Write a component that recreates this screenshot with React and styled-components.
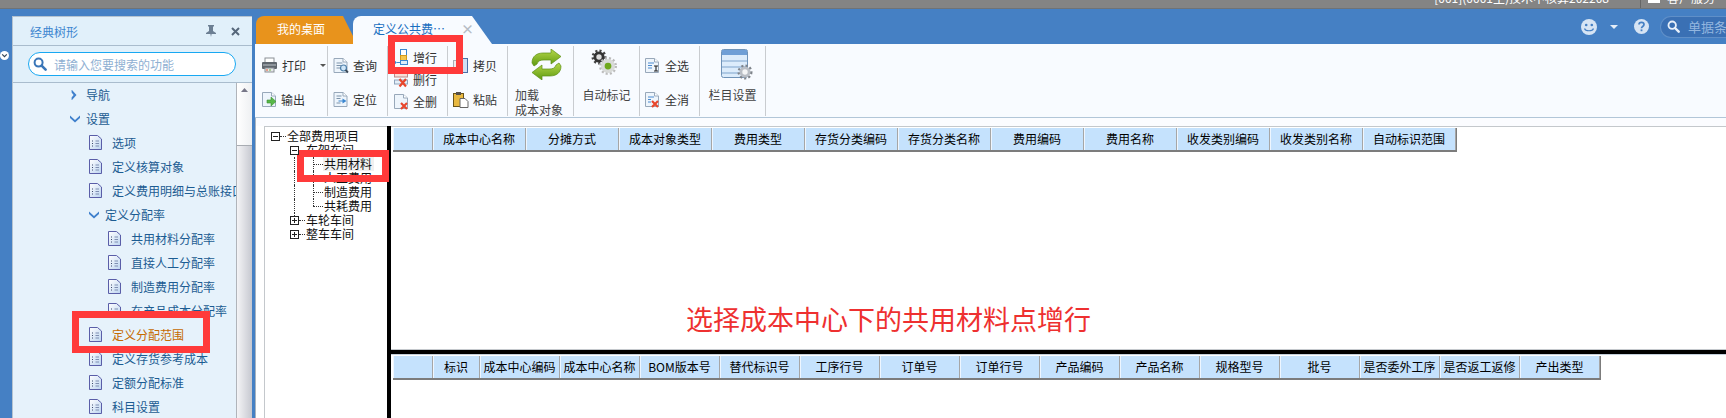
import React from "react";
import styled, { createGlobalStyle } from "styled-components";

const Global = createGlobalStyle`
  html, body { margin: 0; padding: 0; background: #4580c4; }
  body { font-family: "Noto Sans CJK SC", "Liberation Sans", sans-serif; font-size: 12px; }
`;

const Page = styled.div`
  position: relative;
  width: 1726px;
  height: 418px;
  overflow: hidden;
  background: #4580c4;
  display: flex;
  flex-direction: column;
`;

const TopStrip = styled.div`
  height: 8px;
  flex: none;
  background: #848484;
  border-bottom: 1px solid #6f7377;
  display: flex;
  justify-content: flex-end;
  align-items: flex-end;
  overflow: hidden;
  color: #fff;
  line-height: 14px;
`;

const StripText = styled.span`
  white-space: nowrap;
  margin-bottom: 3px;
  margin-right: ${(p) => p.$mr || 0}px;
`;

const StripDivider = styled.div`
  align-self: stretch;
  width: 1px;
  background: #666;
  margin-right: 7px;
`;

const StripIcon = styled.div`
  width: 12px;
  height: 3px;
  background: #fff;
  align-self: flex-start;
  margin-right: 7px;
`;

const Body = styled.div`
  flex: 1;
  min-height: 0;
  display: flex;
  padding-top: 7px;
`;

const Gutter = styled.div`
  width: 12px;
  flex: none;
  padding-top: 35px;
`;

const Sidebar = styled.aside`
  width: 240px;
  flex: none;
  display: flex;
  flex-direction: column;
  background: #e6f2fb;
  border-left: 1px solid #b5c3d0;
  border-top: 1px solid #b5c3d0;
  box-sizing: border-box;
`;

const SideHead = styled.div`
  height: 29px;
  flex: none;
  box-sizing: border-box;
  display: flex;
  align-items: center;
  padding: 0 12px 0 17px;
  background: #e1f0fa;
  border-bottom: 1px solid #a9bccd;
  color: #3d86d0;
`;

const SideTitle = styled.span`
  flex: 1;
`;

const SearchWrap = styled.div`
  height: 37px;
  flex: none;
  box-sizing: border-box;
  padding: 6px 16px 0 15px;
  background: #e1f0fa;
  border-bottom: 1px solid #a9bccd;
`;

const SearchBox = styled.div`
  height: 24px;
  box-sizing: border-box;
  background: #fff;
  border: 1px solid #18a8f2;
  border-radius: 12px;
  display: flex;
  align-items: center;
  gap: 7px;
  padding-left: 4px;
  color: #8fb0d2;
`;

const SideBody = styled.div`
  flex: 1;
  min-height: 0;
  display: flex;
`;

const NavTree = styled.div`
  flex: 1;
  min-width: 0;
  overflow: hidden;
`;

const NavRow = styled.div`
  height: 24px;
  display: flex;
  align-items: center;
  white-space: nowrap;
  color: ${(p) => (p.$active ? "#c56a00" : "#1c5c92")};
  padding-left: ${(p) => p.$indent}px;
  &:first-child {
    height: 23px;
  }
`;

const NavArrow = styled.span`
  width: 16px;
  flex: none;
  display: flex;
`;

const NavIcon = styled.span`
  width: 23px;
  flex: none;
  display: flex;
`;

const Scrollbar = styled.div`
  width: 16px;
  flex: none;
  display: flex;
  flex-direction: column;
  border-left: 1px solid #b0b4ba;
  box-sizing: border-box;
`;

const ScrollTrack = styled.div`
  height: 63px;
  flex: none;
  display: flex;
  justify-content: center;
  padding-top: 5px;
  box-sizing: border-box;
  background: linear-gradient(90deg, #fff, #eef0f2);
  border-bottom: 1px solid #a8acb2;
`;

const ScrollThumb = styled.div`
  flex: 1;
  background: linear-gradient(90deg, #f4f4f6, #c6c8d0);
`;

const Main = styled.main`
  flex: 1;
  min-width: 0;
  margin-left: 3px;
  display: flex;
  flex-direction: column;
`;

const TabRow = styled.div`
  height: 28px;
  flex: none;
  display: flex;
  align-items: stretch;
`;

const TabOrange = styled.div`
  width: 101px;
  margin-left: 1px;
  background: #e8931c;
  color: #fff;
  border-radius: 8px 0 0 0;
  clip-path: polygon(0 0, 87px 0, 101px 100%, 0 100%);
  box-sizing: border-box;
  padding-left: 21px;
  line-height: 26px;
`;

const TabActive = styled.div`
  width: 139px;
  margin-left: -4px;
  background: #f8fbff;
  color: #1a6fc0;
  border-radius: 8px 8px 0 0;
  clip-path: polygon(0 0, 119px 0, 139px 100%, 0 100%);
  box-sizing: border-box;
  padding-left: 20px;
  line-height: 26px;
  display: flex;
`;

const TabClose = styled.span`
  margin-left: 16px;
  color: #b5bcc4;
  font-size: 13px;
  font-weight: 700;
`;

const RightTools = styled.div`
  margin-left: auto;
  display: flex;
  align-items: center;
  padding-bottom: 7px;
`;

const ToolSearch = styled.div`
  width: 66px;
  height: 22px;
  margin-left: 11px;
  box-sizing: border-box;
  background: #3a70b4;
  border: 1px solid #5f8fc8;
  border-right: 0;
  border-radius: 11px 0 0 11px;
  display: flex;
  align-items: center;
  gap: 8px;
  padding-left: 6px;
  overflow: hidden;
  white-space: nowrap;
  color: #93b6df;
  font-size: 13px;
  svg {
    flex: none;
  }
`;

const Toolbar = styled.div`
  height: 74px;
  flex: none;
  box-sizing: border-box;
  display: flex;
  padding: 2px 0 1px;
  background: #f8fbff;
  border-bottom: 1px solid #b2c6d8;
`;

const Group = styled.div`
  width: ${(p) => p.$w}px;
  flex: none;
  box-sizing: border-box;
  border-right: 1px solid #c9ccd0;
  display: flex;
  flex-direction: column;
  padding: ${(p) => p.$pad || "0"};
  color: #333;
`;

const Tool = styled.div`
  display: flex;
  align-items: center;
  height: ${(p) => p.$h || 35}px;
  gap: ${(p) => p.$gap || 4}px;
`;

const Caret = styled.span`
  width: 0;
  height: 0;
  margin-left: 10px;
  border: 3px solid transparent;
  border-top: 3px solid #555;
  border-bottom: 0;
`;

const WhiteCaret = styled(Caret)`
  margin-left: 0;
  border-width: 4px;
  border-bottom: 0;
  border-top-color: #e4edf7;
`;

const BigTool = styled.div`
  display: flex;
  flex-direction: column;
  align-items: ${(p) => (p.$left ? "flex-start" : "center")};
  line-height: 15px;
  color: #444;
  padding-left: ${(p) => p.$pl || 0}px;
`;

const BigIcon = styled.div`
  height: 38px;
  align-self: center;
  display: flex;
  align-items: flex-start;
  padding-top: 3px;
  margin-left: ${(p) => p.$ml || 0}px;
`;

const Content = styled.div`
  flex: 1;
  min-height: 0;
  display: flex;
  background: #fff;
  padding-top: 8px;
  border-left: 1px solid #a9b4be;
  padding-left: 8px;
  background-image: linear-gradient(#fbfcff, #fbfcff);
  background-size: 100% 8px;
  background-repeat: no-repeat;
`;

const TreePane = styled.div`
  width: 123px;
  flex: none;
  box-sizing: border-box;
  background: #fff;
  border-top: 1px solid #c4c8cc;
  border-left: 1px solid #c4c8cc;
  padding-top: 2px;
  color: #111;
`;

const TreeRow = styled.div`
  position: relative;
  height: 14px;
  display: flex;
  align-items: center;
  white-space: nowrap;
  padding-left: ${(p) => p.$indent}px;
`;

const Expander = styled.span`
  width: 9px;
  height: 9px;
  flex: none;
  box-sizing: border-box;
  border: 1px solid #222;
  background: #fff;
  position: relative;
  z-index: 1;
  &::before {
    content: "";
    position: absolute;
    left: 1px;
    right: 1px;
    top: 3px;
    height: 1px;
    background: #222;
  }
  ${(p) =>
    p.$plus &&
    `&::after {
      content: "";
      position: absolute;
      top: 1px;
      bottom: 1px;
      left: 3px;
      width: 1px;
      background: #222;
    }`}
`;

const Dots = styled.span`
  width: ${(p) => p.$w}px;
  flex: none;
  border-top: 1px dotted #333;
`;

const Spine = styled.span`
  position: absolute;
  left: ${(p) => p.$x}px;
  top: ${(p) => p.$top || 0}px;
  bottom: ${(p) => p.$bottom || 0}px;
  border-left: 1px dotted #333;
`;

const TreeLabel = styled.span`
  background: ${(p) => (p.$selected ? "#f0f0f0" : "transparent")};
  padding: 0 2px 0 1px;
  line-height: 14px;
`;

const VSplit = styled.div`
  width: 4px;
  flex: none;
  background: #000;
`;

const Panes = styled.div`
  flex: 1;
  min-width: 0;
  display: flex;
  flex-direction: column;
`;

const TopGridPane = styled.div`
  height: 224px;
  flex: none;
  box-sizing: border-box;
  padding: 1px 0 0 2px;
  background: #fff;
  border-top: 1px solid #c4c8cc;
  border-bottom: 1px solid #c4c8cc;
`;

const BottomGridPane = styled.div`
  flex: 1;
  padding: 1px 0 0 2px;
  background: #fff;
`;

const HSplit = styled.div`
  height: 5px;
  flex: none;
  box-sizing: border-box;
  background: #000;
  border-bottom: 1px solid #c4d0dc;
`;

const GridHead = styled.div`
  display: inline-flex;
  height: 22px;
  border-bottom: 2px solid #7c7c7c;
  border-right: 1px solid #7c7c7c;
`;

const HeadCell = styled.div`
  width: ${(p) => p.$w}px;
  box-sizing: border-box;
  background: #c5e2fd;
  border-right: 1px solid #a6a6a6;
  box-shadow: inset 1px 0 0 #eef6ff;
  text-align: center;
  line-height: 21px;
  color: #000;
  white-space: nowrap;
  overflow: hidden;
`;

const Marker = styled.div`
  position: absolute;
  left: ${(p) => p.$x}px;
  top: ${(p) => p.$y}px;
  width: ${(p) => p.$w}px;
  height: ${(p) => p.$h}px;
  box-sizing: border-box;
  border: 7px solid #ff3a3a;
  pointer-events: none;
`;

const Callout = styled.div`
  position: absolute;
  left: 686px;
  top: 300px;
  font-size: 27px;
  line-height: 38px;
  color: #ee3030;
  white-space: nowrap;
`;

const Pin = () => (
  <svg width="12" height="12" viewBox="0 0 12 12" style={{ marginRight: 14 }}>
    <path d="M3 0h6v1L8 2v4l3 2v1H6.6L6 12l-.6-3H1V8l3-2V2L3 1z" fill="#6c7f93" />
  </svg>
);

const CloseX = () => (
  <svg width="9" height="9" viewBox="0 0 9 9">
    <path d="M1 1l7 7M8 1l-7 7" stroke="#56677a" strokeWidth="2" />
  </svg>
);

const Lens = ({ color = "#3a76b8", size = 14 }) => (
  <svg width={size} height={size} viewBox="0 0 14 14">
    <circle cx="5.6" cy="5.6" r="4" fill="none" stroke={color} strokeWidth="2" />
    <path d="M8.6 8.6l4 4" stroke={color} strokeWidth="2.6" strokeLinecap="round" />
  </svg>
);

const Chevron = ({ open }) => (
  <svg width="10" height="10" viewBox="0 0 10 10">
    <path
      d={open ? "M0 2.5l5 4.5 5-4.5v2.4L5 9.5 0 4.9z" : "M2 0l4.5 5L2 10H1.6V7.6L3.6 5 1.6 2.4V0z"}
      fill="#3f80cc"
    />
  </svg>
);

const PageIcon = () => (
  <svg width="13" height="15" viewBox="0 0 13 15">
    <defs>
      <linearGradient id="pg" x1="0" y1="0" x2="1" y2="1">
        <stop offset="0" stopColor="#fff" />
        <stop offset="1" stopColor="#bcd4f0" />
      </linearGradient>
    </defs>
    <path d="M.5.5h8l4 3.5v10.5H.5z" fill="url(#pg)" stroke="#5a5ea8" />
    <path d="M3 6h2M3 8.5h2M3 11h2" stroke="#3d4a6c" strokeWidth="1.2" strokeDasharray="1 1" />
    <path d="M6.5 6h3.5M6.5 8.5h3.5M6.5 11h3.5" stroke="#7f8fb2" />
  </svg>
);

const SmallDoc = ({ children, w = 16, h = 17 }) => (
  <svg width={w} height={h} viewBox="0 0 16 17">
    <path d="M1.5 1.5h9l4 3.5v10.5h-13z" fill="#eef5fc" stroke="#98a8ba" />
    <path d="M10.5 1.5V5h4" fill="#fff" stroke="#98a8ba" />
    {children}
  </svg>
);

const RedX = () => <path d="M8 10l6 6M14 10l-6 6" stroke="#e8462c" strokeWidth="2.2" />;

const Printer = () => (
  <svg width="17" height="16" viewBox="0 0 17 16">
    <rect x="4" y="1" width="9" height="5" fill="#fff" stroke="#8a8f96" />
    <rect x="1" y="5" width="15" height="7" rx="1" fill="#5f666e" />
    <rect x="2" y="7" width="13" height="2" fill="#8e959c" />
    <rect x="4" y="11" width="9" height="4" fill="#e6e8ea" stroke="#8a8f96" />
    <rect x="5" y="12.5" width="2" height="1" fill="#e8542f" />
    <rect x="8" y="12.5" width="2" height="1" fill="#6cb33f" />
  </svg>
);

const Export = () => (
  <SmallDoc>
    <path d="M6 9h4V6l5 4.5-5 4.5v-3H6z" fill="#58b848" stroke="#3c8f30" strokeWidth=".6" />
  </SmallDoc>
);

const Query = () => (
  <SmallDoc w={17}>
    <path d="M4 6h6M4 8.5h5M4 11h4" stroke="#7d93aa" />
    <circle cx="11" cy="11" r="3" fill="#cfe6f8" stroke="#4d7ea8" strokeWidth="1.2" />
    <path d="M13 13l2.5 2.5" stroke="#3c4a58" strokeWidth="1.8" />
  </SmallDoc>
);

const Locate = () => (
  <SmallDoc w={17}>
    <path d="M4 5h5M4 7.5h4M4 12h4" stroke="#7d93aa" />
    <path d="M6 9.5h4v-2l4 2.5-4 2.5v-2H6z" fill="#3a86d0" />
  </SmallDoc>
);

const AddRow = () => (
  <svg width="16" height="18" viewBox="0 0 16 18">
    <rect x="7.5" y="1.5" width="6" height="6" fill="#fff" stroke="#3a86d0" />
    <rect x="7.5" y="7.5" width="6" height="5" fill="#f6c64c" stroke="#d09a20" />
    <rect x="7.5" y="12.5" width="7" height="4" fill="#dcecf8" stroke="#3a86d0" />
    <path d="M1 12l3 2.5L1 17z" fill="#3a86d0" />
    <path d="M4 14.5h3" stroke="#3a86d0" />
  </svg>
);

const DeleteRow = () => (
  <svg width="17" height="17" viewBox="0 0 16 17">
    <rect x="1" y="2" width="13" height="4" fill="#f8dcd6" stroke="#b88" />
    <rect x="1" y="9" width="13" height="4" fill="#e4eef8" stroke="#8fa4bc" />
    <path d="M6 8l6.5 7.5M12.5 8L6 15.5" stroke="#e8462c" strokeWidth="2.2" />
  </svg>
);

const DeleteAll = () => (
  <SmallDoc>
    <RedX />
  </SmallDoc>
);

const Copy = () => (
  <svg width="17" height="17" viewBox="0 0 17 17">
    <rect x="1.5" y="3.5" width="9" height="12" fill="#eee" stroke="#a8b0b8" />
    <rect x="8.5" y="1.5" width="7" height="14" fill="#cfe0f4" stroke="#4a70a8" />
  </svg>
);

const Paste = () => (
  <svg width="17" height="17" viewBox="0 0 17 17">
    <rect x="1.5" y="2.5" width="10" height="13" fill="#e8b840" stroke="#6a5418" />
    <rect x="4" y="1" width="5" height="3" fill="#55504a" />
    <path d="M8 7.5h5l3 3v6H8z" fill="#fff" stroke="#666" />
  </svg>
);

const Reload = () => (
  <svg width="31" height="31" viewBox="0 0 31 31">
    <defs>
      <linearGradient id="gr" x1="0" y1="0" x2="0" y2="1">
        <stop offset="0" stopColor="#b6d84a" />
        <stop offset="1" stopColor="#5f9a10" />
      </linearGradient>
    </defs>
    <path
      d="M1 14C1 7 6 4 12 4h8V0l10 7.5L20 15v-4h-7c-4 0-6 1-7 4l-3 2z"
      fill="url(#gr)"
      stroke="#5b8f14"
      strokeWidth=".7"
    />
    <path
      d="M30 17c0 7-5 10-11 10h-8v4L1 23.5 11 16v4h7c4 0 6-1 7-4l3-2z"
      fill="url(#gr)"
      stroke="#5b8f14"
      strokeWidth=".7"
    />
  </svg>
);

const Gear = ({ cx, cy, r, body, hub, teeth }) => (
  <g>
    <circle cx={cx} cy={cy} r={r} fill="none" stroke={teeth} strokeWidth="3" strokeDasharray="2 2" />
    <circle cx={cx} cy={cy} r={r - 0.5} fill={body} />
    <circle cx={cx} cy={cy} r={r * 0.45} fill={hub} />
  </g>
);

const AutoMark = () => (
  <svg width="27" height="27" viewBox="0 0 27 27">
    <Gear cx={9} cy={8} r={6} body="#333" hub="#ddd" teeth="#444" />
    <Gear cx={18} cy={17} r={7.5} body="#d8dad8" hub="#6ea81c" teeth="#bbb" />
  </svg>
);

const SelectAll = () => (
  <SmallDoc>
    <path d="M4 6h6M4 8.5h4M4 11h4" stroke="#4a8ad0" />
    <path d="M10 9h4M12 9v5M10 14h4" stroke="#222" strokeWidth="1.1" />
  </SmallDoc>
);

const Unselect = () => (
  <SmallDoc>
    <path d="M4 6h6M4 8.5h3M4 11h3" stroke="#4a8ad0" />
    <RedX />
  </SmallDoc>
);

const Columns = () => (
  <svg width="32" height="32" viewBox="0 0 32 32">
    <rect x=".5" y=".5" width="26" height="28" rx="2" fill="#dcecfb" stroke="#6f93b8" />
    <rect x="1" y="1" width="25" height="5" fill="#6f9fd6" />
    <path d="M1 12h25M1 18h25M1 24h25" stroke="#7ea4cc" />
    <Gear cx={24} cy={23} r={6} body="#b9bec5" hub="#f4f5f6" teeth="#7e838a" />
  </svg>
);

const Smiley = () => (
  <svg width="16" height="16" viewBox="0 0 16 16" style={{ marginRight: 13 }}>
    <circle cx="8" cy="8" r="8" fill="#d6e4f4" />
    <circle cx="5.2" cy="6" r="1.3" fill="#4580c4" />
    <circle cx="10.8" cy="6" r="1.3" fill="#4580c4" />
    <path d="M3.5 9.5c1 3 8 3 9 0" fill="none" stroke="#4580c4" strokeWidth="1.2" />
  </svg>
);

const Help = () => (
  <svg width="15" height="15" viewBox="0 0 15 15" style={{ marginLeft: 16 }}>
    <circle cx="7.5" cy="7.5" r="7.5" fill="#d6e4f4" />
    <path d="M5 5.6c0-3 5-3 5 0 0 2-2.5 1.8-2.5 3.6" fill="none" stroke="#4580c4" strokeWidth="1.7" />
    <rect x="6.6" y="10.4" width="1.8" height="1.8" fill="#4580c4" />
  </svg>
);

const CollapseDot = () => (
  <svg width="9" height="9" viewBox="0 0 9 9" style={{ display: "block" }}>
    <circle cx="4.5" cy="4.5" r="4.5" fill="#fff" />
    <path d="M2.2 3.4l2.3 2.2 2.3-2.2" fill="none" stroke="#345" strokeWidth="1.2" />
  </svg>
);

const navItems = [
  { label: "导航", arrow: "closed", indent: 57 },
  { label: "设置", arrow: "open", indent: 57 },
  { label: "选项", indent: 76 },
  { label: "定义核算对象", indent: 76 },
  { label: "定义费用明细与总账接口", indent: 76 },
  { label: "定义分配率", arrow: "open", indent: 76 },
  { label: "共用材料分配率", indent: 95 },
  { label: "直接人工分配率", indent: 95 },
  { label: "制造费用分配率", indent: 95 },
  { label: "在产品成本分配率", indent: 95 },
  { label: "定义分配范围", indent: 76, active: true },
  { label: "定义存货参考成本", indent: 76 },
  { label: "定额分配标准", indent: 76 },
  { label: "科目设置", indent: 76 },
];

const topColumns = [
  "成本中心名称",
  "分摊方式",
  "成本对象类型",
  "费用类型",
  "存货分类编码",
  "存货分类名称",
  "费用编码",
  "费用名称",
  "收发类别编码",
  "收发类别名称",
  "自动标识范围",
];

const bottomColumns = [
  "成本中心编码",
  "成本中心名称",
  "BOM版本号",
  "替代标识号",
  "工序行号",
  "订单号",
  "订单行号",
  "产品编码",
  "产品名称",
  "规格型号",
  "批号",
  "是否委外工序",
  "是否返工返修",
  "产出类型",
];

export default function App() {
  return (
    <Page>
      <Global />
      <TopStrip>
        <StripText $mr={31}>[001](0001主)技术中核算202208</StripText>
        <StripDivider />
        <StripIcon />
        <StripText $mr={11}>客户服务</StripText>
      </TopStrip>
      <Body>
        <Gutter>
          <CollapseDot />
        </Gutter>
        <Sidebar>
          <SideHead>
            <SideTitle>经典树形</SideTitle>
            <Pin />
            <CloseX />
          </SideHead>
          <SearchWrap>
            <SearchBox>
              <Lens />
              请输入您要搜索的功能
            </SearchBox>
          </SearchWrap>
          <SideBody>
            <NavTree>
              {navItems.map((item) => (
                <NavRow key={item.label} $indent={item.indent} $active={item.active}>
                  {item.arrow ? (
                    <NavArrow>
                      <Chevron open={item.arrow === "open"} />
                    </NavArrow>
                  ) : (
                    <NavIcon>
                      <PageIcon />
                    </NavIcon>
                  )}
                  {item.label}
                </NavRow>
              ))}
            </NavTree>
            <Scrollbar>
              <ScrollTrack>
                <svg width="7" height="4" viewBox="0 0 7 4">
                  <path d="M0 4l3.5-4L7 4z" fill="#778" />
                </svg>
              </ScrollTrack>
              <ScrollThumb />
            </Scrollbar>
          </SideBody>
        </Sidebar>
        <Main>
          <TabRow>
            <TabOrange>我的桌面</TabOrange>
            <TabActive>
              定义公共费…
              <TabClose>×</TabClose>
            </TabActive>
            <RightTools>
              <Smiley />
              <WhiteCaret />
              <Help />
              <ToolSearch>
                <Lens color="#e8f0fa" size={13} />
                单据条码
              </ToolSearch>
            </RightTools>
          </TabRow>
          <Toolbar>
            <Group $w={73} $pad="2px 0 0 6px">
              <Tool>
                <Printer />
                打印
                <Caret />
              </Tool>
              <Tool>
                <Export />
                输出
              </Tool>
            </Group>
            <Group $w={60} $pad="2px 0 0 4px">
              <Tool>
                <Query />
                查询
              </Tool>
              <Tool>
                <Locate />
                定位
              </Tool>
            </Group>
            <Group $w={60} $pad="0 0 0 5px">
              <Tool $h={22}>
                <AddRow />
                增行
              </Tool>
              <Tool $h={22} $gap={3}>
                <DeleteRow />
                删行
              </Tool>
              <Tool $h={22}>
                <DeleteAll />
                全删
              </Tool>
            </Group>
            <Group $w={60} $pad="2px 0 0 4px">
              <Tool>
                <Copy />
                拷贝
              </Tool>
              <Tool>
                <Paste />
                粘贴
              </Tool>
            </Group>
            <Group $w={66}>
              <BigTool $left $pl={7}>
                <BigIcon $ml={4}>
                  <Reload />
                </BigIcon>
                加载
                <br />
                成本对象
              </BigTool>
            </Group>
            <Group $w={66}>
              <BigTool>
                <BigIcon $ml={-6}>
                  <AutoMark />
                </BigIcon>
                自动标记
              </BigTool>
            </Group>
            <Group $w={60} $pad="2px 0 0 4px">
              <Tool $gap={5}>
                <SelectAll />
                全选
              </Tool>
              <Tool $gap={5}>
                <Unselect />
                全消
              </Tool>
            </Group>
            <Group $w={66}>
              <BigTool>
                <BigIcon $ml={8}>
                  <Columns />
                </BigIcon>
                栏目设置
              </BigTool>
            </Group>
          </Toolbar>
          <Content>
            <TreePane>
              <TreeRow $indent={6}>
                <Expander />
                <Dots $w={6} />
                <TreeLabel>全部费用项目</TreeLabel>
              </TreeRow>
              <TreeRow $indent={25}>
                <Expander />
                <Dots $w={6} />
                <TreeLabel>车架车间</TreeLabel>
              </TreeRow>
              {["共用材料", "人工费用", "制造费用", "共耗费用"].map((name, i) => (
                <TreeRow key={name} $indent={48}>
                  <Spine $x={29} />
                  <Spine $x={48} $bottom={i === 3 ? 7 : 0} />
                  <Dots $w={10} />
                  <TreeLabel $selected={i === 0}>{name}</TreeLabel>
                </TreeRow>
              ))}
              <TreeRow $indent={25}>
                <Spine $x={29} $bottom={7} />
                <Expander $plus />
                <Dots $w={6} />
                <TreeLabel>车轮车间</TreeLabel>
              </TreeRow>
              <TreeRow $indent={25}>
                <Expander $plus />
                <Dots $w={6} />
                <TreeLabel>整车车间</TreeLabel>
              </TreeRow>
            </TreePane>
            <VSplit />
            <Panes>
              <TopGridPane>
                <GridHead>
                  <HeadCell $w={40} />
                  {topColumns.map((c) => (
                    <HeadCell key={c} $w={93}>
                      {c}
                    </HeadCell>
                  ))}
                </GridHead>
              </TopGridPane>
              <HSplit />
              <BottomGridPane>
                <GridHead>
                  <HeadCell $w={40} />
                  <HeadCell $w={47}>标识</HeadCell>
                  {bottomColumns.map((c) => (
                    <HeadCell key={c} $w={80}>
                      {c}
                    </HeadCell>
                  ))}
                </GridHead>
              </BottomGridPane>
            </Panes>
          </Content>
        </Main>
      </Body>
      <Marker $x={72} $y={311} $w={138} $h={42} />
      <Marker $x={388} $y={35} $w={75} $h={39} />
      <Marker $x={297} $y={150} $w={92} $h={32} />
      <Callout>选择成本中心下的共用材料点增行</Callout>
    </Page>
  );
}
